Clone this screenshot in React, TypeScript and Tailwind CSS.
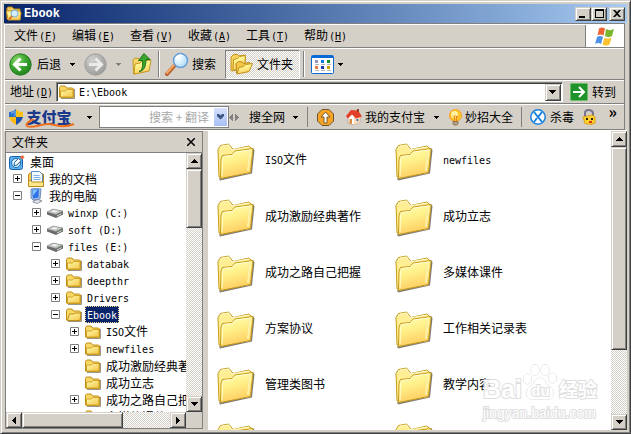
import { useState } from "react";
import type { ComponentType, ReactNode } from "react";

const raised =
  "border border-t-[#d4d0c8] border-l-[#d4d0c8] border-r-[#404040] border-b-[#404040] bg-[#d4d0c8] shadow-[inset_1px_1px_0_#ffffff,inset_-1px_-1px_0_#808080]";
const track = "bg-[repeating-conic-gradient(#ffffff_0_25%,#d4d0c8_0_50%)] bg-[length:2px_2px]";
const band = "flex shrink-0 items-center border-t border-b border-t-white border-b-[#808080]";

const menus = [
  ["文件", "F"],
  ["编辑", "E"],
  ["查看", "V"],
  ["收藏", "A"],
  ["工具", "T"],
  ["帮助", "H"],
];

const files = [
  "ISO文件",
  "newfiles",
  "成功激励经典著作",
  "成功立志",
  "成功之路自己把握",
  "多媒体课件",
  "方案协议",
  "工作相关记录表",
  "管理类图书",
  "教学内容",
  "电子杂志",
  "其他资料",
];

// Latin runs are set in a half-width face so two letters fill one Chinese character
function Mixed({ text }: { text: string }) {
  return (
    <span>
      {text.split(/([\x21-\x7e][\x20-\x7e]*)/).map((part, i) =>
        /^[\x21-\x7e]/.test(part) ? (
          <span key={i} className="font-['DejaVu_Sans_Mono',monospace] text-[10px]">{part}</span>
        ) : (
          part
        ),
      )}
    </span>
  );
}

function AccessKey({ letter }: { letter: string }) {
  return (
    <span className="ml-px font-['DejaVu_Sans_Mono',monospace] text-[10px]">
      (<u className="underline-offset-1">{letter}</u>)
    </span>
  );
}

function Arrow({ dir, className = "" }: { dir: "up" | "down" | "left" | "right"; className?: string }) {
  const shapes = {
    up: "M3 0h1v1h1v1h1v1h1v1H0V3h1V2h1V1h1z",
    down: "M0 0h7v1H6v1H5v1H4v1H3V3H2V2H1V1H0z",
    left: "M3 0h1v7H3V6H2V5H1V4H0V3h1V2h1V1h1z",
    right: "M0 0h1v1h1v1h1v1h1v1H3v1H2v1H1v1H0z",
  };
  const tall = dir === "left" || dir === "right";
  return (
    <svg width={tall ? 4 : 7} height={tall ? 7 : 4} className={className} fill="currentColor" aria-hidden="true">
      <path d={shapes[dir]} />
    </svg>
  );
}

function Caret({ className = "text-black" }: { className?: string }) {
  return (
    <svg width="5" height="3" className={className} fill="currentColor" aria-hidden="true">
      <path d="M0 0h5v1H4v1H3v1H2V2H1V1H0z" />
    </svg>
  );
}

function Gradients() {
  return (
    <svg width="0" height="0" className="absolute" aria-hidden="true">
      <defs>
        <linearGradient id="folder" x1="0" y1="0" x2="0.3" y2="1">
          <stop offset="0" stopColor="#fffbb8" />
          <stop offset="0.45" stopColor="#fff28c" />
          <stop offset="1" stopColor="#ffce62" />
        </linearGradient>
        <linearGradient id="small" x1="0" y1="0" x2="1" y2="1">
          <stop offset="0" stopColor="#fffbb0" />
          <stop offset="1" stopColor="#f3c546" />
        </linearGradient>
        <radialGradient id="green" cx="0.35" cy="0.3" r="0.8">
          <stop offset="0" stopColor="#8fd870" />
          <stop offset="0.5" stopColor="#3aa62f" />
          <stop offset="1" stopColor="#1d7c1a" />
        </radialGradient>
        <radialGradient id="grey" cx="0.35" cy="0.3" r="0.8">
          <stop offset="0" stopColor="#d0d0ce" />
          <stop offset="1" stopColor="#979795" />
        </radialGradient>
        <radialGradient id="lens" cx="0.35" cy="0.35" r="0.7">
          <stop offset="0" stopColor="#ffffff" />
          <stop offset="1" stopColor="#a9dcfa" />
        </radialGradient>
      </defs>
    </svg>
  );
}

function BigFolder() {
  return (
    <svg width="38" height="38" viewBox="0 0 38 38" className="mt-1" aria-hidden="true">
      <path d="m3 37.500 32-7L37.500 7 36 5l-3 25L2 35z" fill="#5f5c56" opacity=".8" />
      <path d="M2 34 1 6.500 3.500 2.500l8-1.500L15 5l1 1.500L32 3l2 2 1.500.500L33 29z" fill="#ffee93" stroke="#c69a16" />
      <path d="M3 5.500 5 3l6.500-1L15 7l17-3" fill="none" stroke="#fffbd2" />
      <path d="M3.500 35.500 4 16l1.500-3.500 9.500-1 3-3.500L36 5.500 33.500 29.500z" fill="url(#folder)" stroke="#c69a16" strokeLinejoin="round" />
      <path d="M5 33.500 5.500 16.500l1-3 9-1 3-3.500L34.500 7" fill="none" stroke="#fffcd6" />
      <path d="M33 9 31 28" stroke="#fff0a8" strokeWidth="2" />
    </svg>
  );
}

function SmallFolder({ open = false }: { open?: boolean }) {
  return (
    <svg width="16" height="16" viewBox="0 0 16 16" aria-hidden="true">
      <path d="M2 14.500h13.500V5" fill="none" stroke="#99968c" />
      <path d="M.5 13V3.500l1-1.500H6l1.500 2h6l1 1v8.500H1.500z" fill="#f7d865" stroke="#c08e14" />
      {open ? (
        <path d="m1.500 13.500 2-6.500H8l1-1h6l-1 7.500z" fill="url(#small)" stroke="#c08e14" />
      ) : (
        <path d="M1.500 13V7h5l1.500-1.500h6V13z" fill="url(#small)" stroke="#d3a42a" />
      )}
    </svg>
  );
}

const OpenFolder = () => <SmallFolder open />;

function DesktopIcon() {
  return (
    <svg width="16" height="16" viewBox="0 0 16 16" aria-hidden="true">
      <rect x=".5" y="2.500" width="13" height="13" rx="2" fill="#5cb0ee" stroke="#1762ad" />
      <circle cx="7" cy="9" r="4.500" fill="#d9effc" stroke="#1969b5" />
      <path d="m5 11.500.500-3 4-4 2.500 2-4 4.500z" fill="#fff" stroke="#21659d" />
      <path d="m11 4 2-3 2.500 2-2 2.500z" fill="#e8673d" />
    </svg>
  );
}

function DocsIcon() {
  return (
    <svg width="16" height="16" viewBox="0 0 16 16" aria-hidden="true">
      <path d="M.5 14V3.500L2 2h3v12.500z" fill="#f6cd55" stroke="#b88a18" />
      <path d="M14 3h1.500v11H14z" fill="#f6cd55" stroke="#b88a18" />
      <path d="M3.500.5h8l3 3v9h-11z" fill="#f5faff" stroke="#5b87bd" />
      <path d="M5.500 4.500h6m-6 2h7m-7 2h7" stroke="#7dafe0" />
      <path d="M.5 15.500v-6h2l1.500 1.500h11.500v4.500z" fill="#ffe98c" stroke="#b88a18" />
    </svg>
  );
}

function ComputerIcon() {
  return (
    <svg width="16" height="16" viewBox="0 0 16 16" aria-hidden="true">
      <path d="m5 13 5-1.500 4 1.500-5 2.500-4-1.500z" fill="#e4e6ec" stroke="#8e949f" />
      <path d="m3 1 8-1 2 1-1 10-7 1-2-2z" fill="#a5bfe3" stroke="#718db8" />
      <path d="m4 2 7-1-.5 8.500L5 10.500z" fill="#2e74e8" />
      <path d="m4.500 2.500 5.500-1-5 6z" fill="#83c5fc" />
    </svg>
  );
}

function DriveIcon() {
  return (
    <svg width="16" height="16" viewBox="0 0 16 16" aria-hidden="true">
      <path d="M0 7 6 4l10 2v3.500L9 13 0 9.500z" fill="#6a6a6a" />
      <path d="M0 7 6 4l10 2-7 3.500z" fill="#c4c4c4" stroke="#8c8c8c" strokeWidth=".5" />
      <path d="M4 6.500 7 5l4 1-3 1.500z" fill="#f1f1f1" />
      <path d="m10 11 4-2" stroke="#ddd" />
      <path d="M14 8h1v1h-1z" fill="#6bd05c" />
    </svg>
  );
}

function RoundArrow({ back = false }: { back?: boolean }) {
  return (
    <svg width="23" height="23" viewBox="0 0 23 23" aria-hidden="true">
      <circle cx="11.500" cy="11.500" r="10.700" fill={back ? "url(#green)" : "url(#grey)"} stroke={back ? "#2a7f25" : "#a0a09e"} />
      <path
        d={back ? "M18 11.500H6m5.500-6-6 6 6 6" : "M5 11.500h12m-5.500-6 6 6-6 6"}
        fill="none"
        stroke={back ? "#fff" : "#ecebe8"}
        strokeWidth="3"
      />
    </svg>
  );
}

function UpFolder() {
  return (
    <svg width="20" height="24" viewBox="0 0 20 24" aria-hidden="true">
      <path d="M1.500 22 1 8l2-2 4 .5 1 2 9-1L16 19z" fill="#f6d468" stroke="#c79a20" />
      <path d="m2 22 1-10 5-1 2-2 9-1-2 11z" fill="url(#folder)" stroke="#c79a20" />
      <path d="M7 19.500c3-1 4-4 3.500-11H6.500L12 1.500l6 6h-4c0 8-3 12-7 12z" fill="#39a72d" stroke="#1e741b" />
    </svg>
  );
}

function SearchIcon() {
  return (
    <svg width="24" height="24" viewBox="0 0 24 24" aria-hidden="true">
      <path d="m2 22 8-9" stroke="#b35f29" strokeWidth="4" strokeLinecap="round" />
      <path d="m2 21 7-8" stroke="#f7a765" strokeWidth="2" strokeLinecap="round" />
      <circle cx="15.500" cy="8.500" r="7" fill="url(#lens)" stroke="#6a9ed8" strokeWidth="1.500" />
      <path d="M11 7c1-3 4-4 6-3" fill="none" stroke="#fff" strokeWidth="2" />
    </svg>
  );
}

function FoldersIcon() {
  return (
    <svg width="23" height="22" viewBox="0 0 23 22" aria-hidden="true">
      <path d="M1 17.500V4l2-2 4-1 2 2 6-1 .5 3L14 14 2.500 18z" fill="#f8d35d" stroke="#c2921a" />
      <path d="m3 17.500.500-11 4-1 2-2 6-1-1 12z" fill="url(#folder)" stroke="#c2921a" />
      <path d="M6.500 20 6 10.500l2.500-2 4 .5 1 1.500 6-1 1 3-2 6z" fill="#f3c548" stroke="#b98916" />
      <path d="m7 21 2-6.500 4.500-1 2-2 7-1-3.500 8z" fill="url(#folder)" stroke="#c2921a" />
    </svg>
  );
}

function ViewsIcon() {
  const dots = ["#9c91c8", "#0b7bea", "#12952c", "#f17946", "#153fae", "#d1a000"];
  return (
    <svg width="23" height="19" viewBox="0 0 23 19" aria-hidden="true">
      <rect x=".5" y=".5" width="22" height="18" rx="1" fill="#fff" stroke="#0a6bd2" />
      <path d="M1 1h21v2H1z" fill="#0868d7" />
      {dots.map((color, i) => (
        <g key={color}>
          <rect x={4 + (i % 3) * 6} y={i < 3 ? 5 : 11} width="3" height="3" fill={color} />
          <rect x={4 + (i % 3) * 6} y={i < 3 ? 9 : 15} width="4" height="1" fill="#b6b6b6" />
        </g>
      ))}
    </svg>
  );
}

function WindowsFlag() {
  return (
    <svg width="20" height="19" viewBox="0 0 20 19" aria-hidden="true">
      <path d="M4 1.500c2-1.500 4-1.500 6 0L8.500 8.500c-2-1.500-4-1.500-6 0z" fill="#ee6434" />
      <path d="M11 2c3 1.500 5 1.500 8 0l-2 7c-2 1.500-5 1.500-7 0z" fill="#7cb62f" />
      <path d="M2 10c2-1.500 4-1.500 6 0l-2 7c-2-1.500-4-1.500-6 0z" fill="#4e91e8" />
      <path d="M9.500 10.500c2 1.500 5 1.500 7 0l-2 7c-2 1.500-5 1.500-7 0z" fill="#fbc22d" />
    </svg>
  );
}

function TitleIcon() {
  return (
    <svg width="16" height="16" viewBox="0 0 16 16" aria-hidden="true">
      <path d="M1 13V2l1-1h4l2 2h6v10z" fill="#f2c858" stroke="#bd8a15" />
      <path d="M2 14 .5 5H14l1 2-1 7z" fill="url(#folder)" stroke="#c7951f" />
      <circle cx="8.500" cy="7.500" r="3.500" fill="#d3effe" stroke="#73add8" />
      <path d="m6 10-3 3.500" stroke="#d9772b" strokeWidth="2" />
    </svg>
  );
}

function Shield() {
  return (
    <svg width="14" height="16" viewBox="0 0 14 16" aria-hidden="true">
      <path d="M0 3c3 0 5-1 7-3v8H0z" fill="#2b71c9" />
      <path d="M14 3c-3 0-5-1-7-3v8h7z" fill="#f9c21b" />
      <path d="M0 8h7v8C3 14 1 11 0 8z" fill="#f9ba16" />
      <path d="M14 8H7v8c4-2 6-5 7-8z" fill="#1e50ad" />
      <path d="M2 4c2 0 3-1 4-2v5" fill="none" stroke="#82bdf1" />
    </svg>
  );
}

function UploadIcon() {
  return (
    <svg width="17" height="17" viewBox="0 0 17 17" aria-hidden="true">
      <path d="M5 .5h7L16.500 5v7L12 16.500H5L.5 12V5z" fill="#f7a426" stroke="#6d5430" />
      <path d="M7 14V8H4l4.500-5L13 8h-3v6z" fill="#fff" stroke="#7a5a26" />
    </svg>
  );
}

function HouseIcon() {
  return (
    <svg width="16" height="16" viewBox="0 0 16 16" aria-hidden="true">
      <path d="M2 7v7l6 2 6-3V6L6 4z" fill="#fff" stroke="#c0a797" />
      <path d="M8 8 14 6v7l-6 3z" fill="#fbd9b5" />
      <path d="M3.500 10h2.500v5l-2.500-1z" fill="#d98935" />
      <path d="m0 7 5-6 7 .500 4 6-6 2-4-4-4 4z" fill="#e3402a" />
      <path d="M11 0h2v3h-2z" fill="#9c3d2c" />
      <path d="M10.500 10h2v2h-2z" fill="#3d7bc0" />
    </svg>
  );
}

function BulbIcon() {
  return (
    <svg width="15" height="17" viewBox="0 0 15 17" aria-hidden="true">
      <circle cx="7.500" cy="6.500" r="6" fill="#ffc629" stroke="#f59c24" />
      <circle cx="6.500" cy="5.500" r="3.500" fill="#fff2a1" />
      <path d="M5 6.500 6.500 8l1-1.500L9 8l1-1.500M6.500 8v4m2-4v4" fill="none" stroke="#ed841e" />
      <path d="M5 12.500h5v2L9 16H6l-1-1.500z" fill="#b3a087" stroke="#8b7650" />
    </svg>
  );
}

function AntivirusIcon() {
  return (
    <svg width="16" height="16" viewBox="0 0 16 16" aria-hidden="true">
      <circle cx="8" cy="8" r="7.200" fill="#fff" stroke="#1680e0" strokeWidth="1.500" />
      <path d="m4 3 8 10M12 3 8.500 7.500M7 9l-3 4" stroke="#1680e0" strokeWidth="2" />
    </svg>
  );
}

function LockIcon() {
  return (
    <svg width="14" height="16" viewBox="0 0 14 16" aria-hidden="true">
      <path d="M3 8V4c0-4 7-4 8 0v3" fill="none" stroke="#77758d" strokeWidth="2" />
      <path d="m1 8 9-2 3 2v6l-4 1.500-6-1z" fill="#ffd22d" stroke="#dd9d15" />
      <path d="M4 9h2v2H4zm5 0h2v2H9z" fill="#2d2410" />
      <path d="M7 13h3" stroke="#d83324" strokeWidth="2" />
    </svg>
  );
}

type Node = { level: number; name: string; Icon: ComponentType; box?: "plus" | "minus" };

const tree: Node[] = [
  { level: 0, name: "桌面", Icon: DesktopIcon },
  { level: 1, name: "我的文档", Icon: DocsIcon, box: "plus" },
  { level: 1, name: "我的电脑", Icon: ComputerIcon, box: "minus" },
  { level: 2, name: "winxp (C:)", Icon: DriveIcon, box: "plus" },
  { level: 2, name: "soft (D:)", Icon: DriveIcon, box: "plus" },
  { level: 2, name: "files (E:)", Icon: DriveIcon, box: "minus" },
  { level: 3, name: "databak", Icon: SmallFolder, box: "plus" },
  { level: 3, name: "deepthr", Icon: SmallFolder, box: "plus" },
  { level: 3, name: "Drivers", Icon: SmallFolder, box: "plus" },
  { level: 3, name: "Ebook", Icon: OpenFolder, box: "minus" },
  { level: 4, name: "ISO文件", Icon: SmallFolder, box: "plus" },
  { level: 4, name: "newfiles", Icon: SmallFolder, box: "plus" },
  { level: 4, name: "成功激励经典著作", Icon: SmallFolder },
  { level: 4, name: "成功立志", Icon: SmallFolder },
  { level: 4, name: "成功之路自己把握", Icon: SmallFolder, box: "plus" },
  { level: 4, name: "多媒体课件", Icon: SmallFolder },
];

const indents = ["pl-[3px]", "pl-[7px]", "pl-[26px]", "pl-[45px]", "pl-[64px]"];

function TreeRow({ node, active, onPick }: { node: Node; active: boolean; onPick: () => void }) {
  const { level, name, Icon, box } = node;
  return (
    <li className={`flex h-[17px] items-center whitespace-nowrap ${indents[level]}`}>
      {level > 0 && (
        <span className="mr-[6px] flex w-[9px] shrink-0">
          {box && (
            <button aria-label={box === "plus" ? "展开" : "折叠"}>
              <svg width="9" height="9" className="block" aria-hidden="true">
                <path d="M.5.5h8v8h-8z" fill="#fff" stroke="#808080" />
                <path d={box === "plus" ? "M2 4.500h5M4.500 2v5" : "M2 4.500h5"} stroke="#000" />
              </svg>
            </button>
          )}
        </span>
      )}
      <span className="mr-[3px] shrink-0">
        <Icon />
      </span>
      <button
        onClick={onPick}
        className={`h-[17px] px-[2px] leading-[16px] ${active ? "bg-[#0a246a] text-white outline-1 -outline-offset-1 outline-dotted outline-[#f5db95]" : ""}`}
      >
        <Mixed text={name} />
      </button>
    </li>
  );
}

function ScrollButton({ dir }: { dir: "up" | "down" | "left" | "right" }) {
  return (
    <button className={`flex h-4 w-4 shrink-0 items-center justify-center ${raised}`} aria-label={dir}>
      <Arrow dir={dir} />
    </button>
  );
}

function Bar({ across = false, children }: { across?: boolean; children: ReactNode }) {
  return (
    <div className={across ? "flex h-4 min-w-0 flex-1" : "flex w-4 shrink-0 flex-col"}>
      <ScrollButton dir={across ? "left" : "up"} />
      <div className={`min-h-0 min-w-0 flex-1 ${track}`}>{children}</div>
      <ScrollButton dir={across ? "right" : "down"} />
    </div>
  );
}

function Divider() {
  return <span className="h-[26px] w-[2px] shrink-0 border-l border-l-[#808080] bg-white" />;
}

function TitleBar() {
  return (
    <header className="flex h-[19px] shrink-0 items-center bg-linear-to-r from-[#0a246a] to-[#a6caf0] pr-[2px] pl-[2px]">
      <TitleIcon />
      <h1 className="ml-[2px] flex-1 font-['Liberation_Mono',monospace] text-[12px] font-bold text-white">Ebook</h1>
      <button aria-label="最小化" className={`flex h-[14px] w-4 items-end pb-[2px] pl-[3px] ${raised}`}>
        <span className="h-[2px] w-[6px] bg-black" />
      </button>
      <button aria-label="最大化" className={`flex h-[14px] w-4 items-center justify-center ${raised}`}>
        <span className="h-[9px] w-[9px] border border-t-2 border-black" />
      </button>
      <button aria-label="关闭" className={`ml-[2px] flex h-[14px] w-4 items-center justify-center ${raised}`}>
        <svg width="8" height="7" aria-hidden="true">
          <path d="M0 0h2l2 2 2-2h2L5 3.500 8 7H6L4 5 2 7H0l3-3.500z" />
        </svg>
      </button>
    </header>
  );
}

function MenuBar() {
  return (
    <nav className={`h-6 ${band}`} aria-label="菜单">
      <div className="flex flex-1">
        {menus.map(([label, letter]) => (
          <button key={label} className="w-[58px] pl-[9px] text-left whitespace-nowrap">
            {label}
            <AccessKey letter={letter} />
          </button>
        ))}
      </div>
      <div className="flex h-full w-[39px] items-center justify-center border-l border-l-[#808080] bg-white">
        <WindowsFlag />
      </div>
    </nav>
  );
}

function Toolbar() {
  return (
    <div className={`h-8 pl-1 ${band}`}>
      <button className="flex items-center gap-[5px]">
        <RoundArrow back />
        后退
      </button>
      <button className="ml-[9px]" aria-label="后退历史">
        <Caret />
      </button>
      <button className="ml-[9px]" aria-label="前进">
        <RoundArrow />
      </button>
      <button className="ml-[9px]" aria-label="前进历史">
        <Caret className="text-[#808080]" />
      </button>
      <button className="mr-[6px] ml-[11px]" aria-label="向上">
        <UpFolder />
      </button>
      <Divider />
      <button className="ml-[5px] flex items-center gap-[3px]">
        <SearchIcon />
        搜索
      </button>
      <button
        aria-pressed="true"
        className={`mr-[3px] ml-[9px] flex h-[29px] items-center gap-[4px] border border-t-[#808080] border-r-white border-b-white border-l-[#808080] px-[4px] pr-[6px] ${track}`}
      >
        <FoldersIcon />
        文件夹
      </button>
      <Divider />
      <button className="ml-[6px] flex items-center gap-[4px]" aria-label="查看方式">
        <ViewsIcon />
        <Caret />
      </button>
    </div>
  );
}

function AddressBar() {
  const [path, setPath] = useState("E:\\Ebook");
  return (
    <form className={`h-6 pl-[5px] ${band}`} onSubmit={(e) => e.preventDefault()}>
      <label htmlFor="address" className="w-[46px] whitespace-nowrap">
        地址
        <AccessKey letter="D" />
      </label>
      <div className="flex h-5 min-w-0 flex-1 items-center border border-t-[#808080] border-r-white border-b-white border-l-[#808080] bg-white pl-[2px] shadow-[inset_1px_1px_0_#404040]">
        <SmallFolder />
        <input
          id="address"
          value={path}
          onChange={(e) => setPath(e.target.value)}
          className="ml-1 h-4 min-w-0 flex-1 pt-px font-['DejaVu_Sans_Mono',monospace] text-[10px] outline-none"
        />
        <button type="button" aria-label="地址列表" className={`mr-px flex h-[17px] w-4 items-center justify-center ${raised}`}>
          <Arrow dir="down" />
        </button>
      </div>
      <button className="mr-[8px] ml-[7px] flex items-center gap-1">
        <svg width="18" height="18" viewBox="0 0 18 18" aria-hidden="true">
          <rect x=".5" y=".5" width="17" height="17" rx="1" fill="#20922a" stroke="#65bd66" />
          <path d="M3 9h11M9 4l5 5-5 5" fill="none" stroke="#fff" strokeWidth="2" />
        </svg>
        转到
      </button>
    </form>
  );
}

function AlipayBar() {
  return (
    <div className={`h-[26px] pl-1 whitespace-nowrap ${band}`}>
      <button className="flex items-center gap-[3px]">
        <Shield />
        <span className="relative w-[46px] text-[15px] leading-5 font-black text-[#1c3a8c]">
          支付宝
          <svg width="50" height="10" viewBox="0 0 50 10" className="absolute top-[12px] -left-px" aria-hidden="true">
            <path d="M9 0C4 2 0 5 2 7c5 3 14-2 21-2s14 5 26 0" fill="none" stroke="#f0701c" strokeWidth="2" />
          </svg>
        </span>
      </button>
      <button className="mr-[7px] ml-[15px]" aria-label="支付宝菜单">
        <Caret />
      </button>
      <div className="flex h-[22px] w-[130px] items-center border border-[#808080] bg-white pr-px">
        <input
          aria-label="搜索或翻译"
          placeholder="搜索 + 翻译"
          className="min-w-0 flex-1 pr-[5px] text-right outline-none placeholder:text-[#a8a8a8]"
        />
        <button aria-label="搜索选项" className="flex h-[18px] w-[13px] items-center justify-center bg-linear-to-b from-[#d6e2fc] to-[#a9bff4]">
          <svg width="7" height="6" aria-hidden="true">
            <path d="M0 0h2l1.500 1.500L5 0h2v2L3.500 5.500 0 2z" fill="#3d5585" />
          </svg>
        </button>
      </div>
      <span className="flex w-5 items-center gap-[2px] text-[#808080]">
        <Arrow dir="left" />
        <Arrow dir="right" />
      </span>
      <button className="flex items-center gap-[8px]">
        搜全网
        <Caret />
      </button>
      <span className="mx-[9px] h-5 w-px bg-[#808080]" />
      <button className="mr-[12px]" aria-label="上传">
        <UploadIcon />
      </button>
      <button className="flex items-center gap-[3px]">
        <HouseIcon />
        我的支付宝
      </button>
      <button className="mx-[9px]" aria-label="支付宝列表">
        <Caret />
      </button>
      <button className="flex items-center gap-[2px]">
        <BulbIcon />
        妙招大全
      </button>
      <span className="mx-[8px] h-5 w-px bg-[#808080]" />
      <button className="flex items-center gap-1">
        <AntivirusIcon />
        杀毒
      </button>
      <button className="ml-[8px]" aria-label="安全">
        <LockIcon />
      </button>
      <button className="ml-auto self-start pr-[7px] pl-2 text-[16px] leading-3 font-bold">»</button>
    </div>
  );
}

function FolderTree() {
  const [selected, setSelected] = useState(9);
  return (
    <aside className="mb-px flex w-[198px] shrink-0 flex-col border border-[#808080]">
      <div className="flex h-[21px] shrink-0 items-center justify-between border-b border-b-[#808080] pr-[7px] pl-[6px]">
        <h2>文件夹</h2>
        <button aria-label="关闭文件夹栏">
          <svg width="8" height="8" aria-hidden="true">
            <path d="m0 0 8 8M8 0 0 8" stroke="#000" strokeWidth="1.500" />
          </svg>
        </button>
      </div>
      <div className="flex min-h-0 flex-1 bg-white">
        <ul className="min-w-0 flex-1 overflow-hidden">
          {tree.map((node, i) => (
            <TreeRow key={i} node={node} active={i === selected} onPick={() => setSelected(i)} />
          ))}
        </ul>
        <Bar>
          <div className={`h-[26%] ${raised}`} />
        </Bar>
      </div>
      <div className="flex h-4 shrink-0">
        <Bar across>
          <div className={`h-4 w-[68%] ${raised}`} />
        </Bar>
        <span className="w-4" />
      </div>
    </aside>
  );
}

function Watermark() {
  return (
    <div className="pointer-events-none absolute right-[30px] bottom-[9px] w-[114px] text-white opacity-90 [-webkit-text-stroke:2px_#dcdcdc] [paint-order:stroke_fill]">
      <div className="flex h-9 items-end justify-between">
        <span className="font-['Liberation_Sans',sans-serif] text-[25px] leading-6 font-bold">Bai</span>
        <span className="relative flex h-9 w-[34px] items-end justify-center">
          <svg width="34" height="38" viewBox="0 0 34 38" className="absolute bottom-0 left-0" aria-hidden="true">
            <g fill="#fff" stroke="#d4d4d4">
              <ellipse cx="4.500" cy="16" rx="4" ry="5" />
              <ellipse cx="12" cy="7" rx="4" ry="5.500" />
              <ellipse cx="22" cy="7" rx="4" ry="5.500" />
              <ellipse cx="29.500" cy="15" rx="4" ry="5" />
              <path d="M17 15c-5 0-5 5-9 8-4 2-5 5-4 9 1 5 6 5 13 4 7 1 12 1 13-4 1-4 0-6-4-9-4-3-4-8-9-8z" />
            </g>
          </svg>
          <span className="relative font-['Liberation_Sans',sans-serif] text-[15px] leading-5 font-bold">du</span>
        </span>
        <span className="text-[19px] leading-6 font-bold">经验</span>
      </div>
      <p className="mt-1 font-['Liberation_Sans',sans-serif] text-[14px] leading-4">jingyan.baidu.com</p>
    </div>
  );
}

export default function App() {
  return (
    <main className="flex h-screen min-h-[300px] w-full flex-col overflow-hidden border border-t-[#d4d0c8] border-r-[#404040] border-b-[#404040] border-l-[#d4d0c8] bg-[#d4d0c8] p-[3px] font-['Noto_Sans_CJK_SC',sans-serif] text-[12px] leading-4 text-black shadow-[inset_1px_1px_0_#ffffff,inset_-1px_-1px_0_#808080]">
      <Gradients />
      <TitleBar />
      <div className="mr-[2px] shrink-0 border-t border-r border-l border-t-[#808080] border-r-[#808080] border-l-white">
        <MenuBar />
        <Toolbar />
        <AddressBar />
        <AlipayBar />
      </div>
      <div className="flex min-h-0 flex-1 border-t border-t-white pl-px">
        <FolderTree />
        <div className="relative ml-[5px] flex min-w-0 flex-1 bg-white">
          <ul className="grid min-w-0 flex-1 auto-rows-[56px] grid-cols-[178px_178px] content-start overflow-hidden pt-px pl-[9px]">
            {files.map((name) => (
              <li key={name}>
                <button className="flex h-14 items-center gap-[10px] whitespace-nowrap">
                  <BigFolder />
                  <Mixed text={name} />
                </button>
              </li>
            ))}
          </ul>
          <Bar>
            <div className={`h-[76%] ${raised}`} />
          </Bar>
          <Watermark />
        </div>
      </div>
    </main>
  );
}
